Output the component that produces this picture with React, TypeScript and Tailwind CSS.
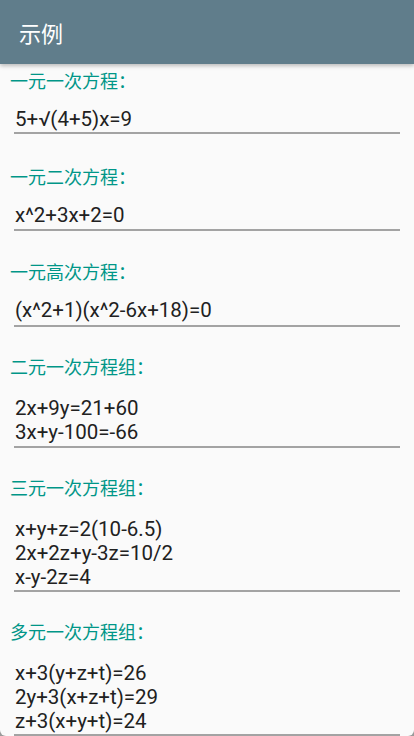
import React from "react";

interface Example {
  label: string;
  lines: string[];
  top: string; // space above the label
  gap: string; // space between label and field
  pad: string; // space above the underline
}

// spacing measured section by section from the screen
const examples: Example[] = [
  { label: "一元一次方程：", lines: ["5+√(4+5)x=9"], top: "mt-0", gap: "mt-[15px]", pad: "pb-[1px]" },
  { label: "一元二次方程：", lines: ["x^2+3x+2=0"], top: "mt-[30px]", gap: "mt-[15px]", pad: "pb-[2px]" },
  { label: "一元高次方程：", lines: ["(x^2+1)(x^2-6x+18)=0"], top: "mt-[28px]", gap: "mt-[15px]", pad: "pb-[3px]" },
  {
    label: "二元一次方程组：",
    lines: ["2x+9y=21+60", "3x+y-100=-66"],
    top: "mt-[27px]",
    gap: "mt-[18px]",
    pad: "pb-[2px]",
  },
  {
    label: "三元一次方程组：",
    lines: ["x+y+z=2(10-6.5)", "2x+2z+y-3z=10/2", "x-y-2z=4"],
    top: "mt-[27px]",
    gap: "mt-[18px]",
    pad: "pb-[1px]",
  },
  {
    label: "多元一次方程组：",
    lines: ["x+3(y+z+t)=26", "2y+3(x+z+t)=29", "z+3(x+y+t)=24"],
    top: "mt-[27px]",
    gap: "mt-[18px]",
    pad: "pb-[1px]",
  },
];

const cjk = { fontFamily: '"Noto Sans CJK SC", "Noto Sans", sans-serif' };

export default function App() {
  return (
    <div className="w-[414px] h-[736px] overflow-hidden bg-[#9a9a9a]">
      <div className="relative h-full flex flex-col bg-[#fafafa] rounded-b-[6px] overflow-hidden">
        {/* Toolbar */}
        <header className="h-16 shrink-0 flex items-center px-[19px] bg-[#607d8b] shadow-[0_2px_4px_rgba(0,0,0,0.25)] z-10">
          <h1 className="text-[22px] text-white leading-none" style={cjk}>
            示例
          </h1>
        </header>

        {/* Examples */}
        <main className="flex flex-col pt-[4px]">
          {examples.map((ex, i) => (
            <section key={i} className={ex.top}>
              <p className="pl-[10px] text-[18px] leading-[24px] text-[#009688]" style={cjk}>
                {ex.label}
              </p>
              <div
                className={
                  ex.gap +
                  " " +
                  ex.pad +
                  " mx-[14px] pl-[1px] border-b-2 border-[#a3a3a3] text-[20.5px] leading-[24px] text-[#212121]"
                }
                style={{ fontFamily: 'Roboto, "Liberation Sans", sans-serif' }}
              >
                {ex.lines.map((line) => (
                  <div key={line}>{line}</div>
                ))}
              </div>
            </section>
          ))}
        </main>
      </div>
    </div>
  );
}
